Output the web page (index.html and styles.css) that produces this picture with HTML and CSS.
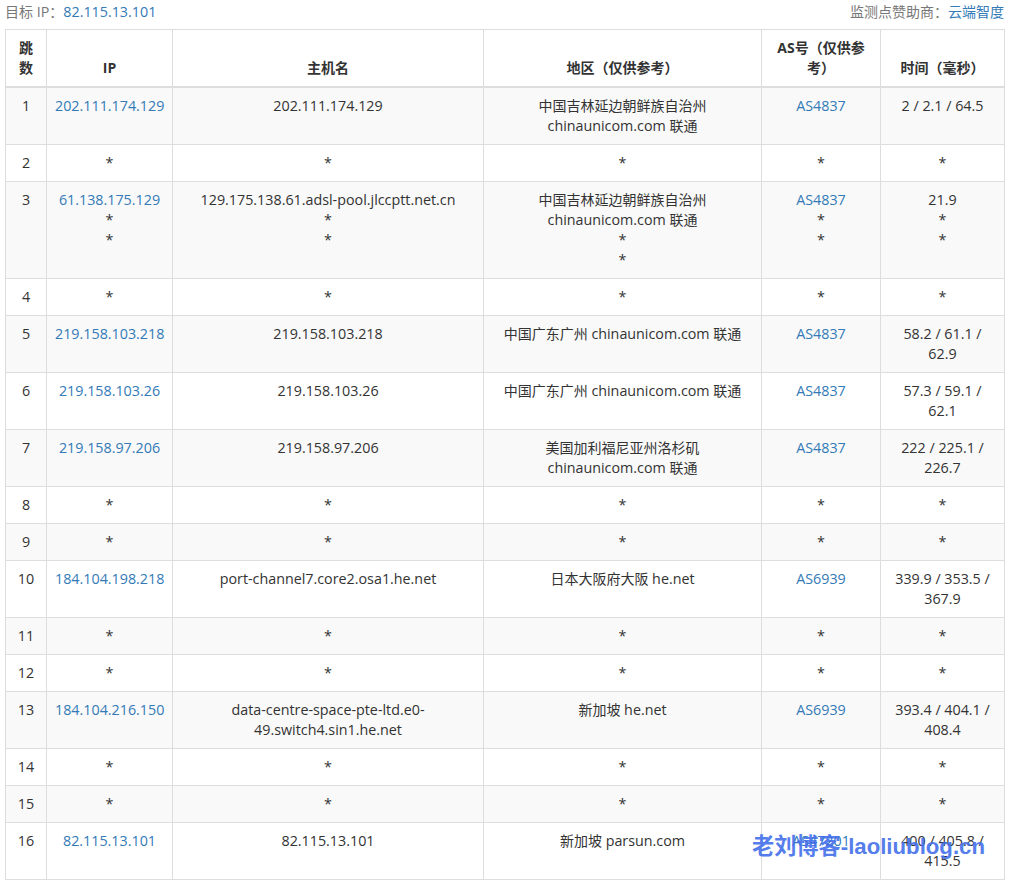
FILE: index.html
```html
<!DOCTYPE html>
<html lang="zh-CN">
<head>
<meta charset="utf-8">
<title>Traceroute</title>
<link rel="stylesheet" href="styles.css">
</head>
<body>
<div class="top">
  <div class="muted"><span class="zh">目标</span> IP<span class="zh">：</span><a href="#">82.115.13.101</a></div>
  <div class="muted"><span class="zh">监测点赞助商：</span><a href="#" class="zh">云端智度</a></div>
</div>
<table class="trace">
  <colgroup>
    <col class="c1"><col class="c2"><col class="c3"><col class="c4"><col class="c5"><col class="c6">
  </colgroup>
  <thead>
    <tr><th>跳数</th><th>IP</th><th>主机名</th><th>地区（仅供参考）</th><th>AS号（仅供参考）</th><th>时间（毫秒）</th></tr>
  </thead>
  <tbody>
    <tr class="alt"><td>1</td><td><a href="#">202.111.174.129</a></td><td>202.111.174.129</td><td><span class="zh">中国吉林延边朝鲜族自治州</span><br>chinaunicom.com <span class="zh">联通</span></td><td><a href="#">AS4837</a></td><td>2 / 2.1 / 64.5</td></tr>
    <tr><td>2</td><td>*</td><td>*</td><td>*</td><td>*</td><td>*</td></tr>
    <tr class="alt"><td>3</td><td><a href="#">61.138.175.129</a><br>*<br>*</td><td>129.175.138.61.adsl-pool.jlccptt.net.cn<br>*<br>*</td><td><span class="zh">中国吉林延边朝鲜族自治州</span><br>chinaunicom.com <span class="zh">联通</span><br>*<br>*</td><td><a href="#">AS4837</a><br>*<br>*</td><td>21.9<br>*<br>*</td></tr>
    <tr><td>4</td><td>*</td><td>*</td><td>*</td><td>*</td><td>*</td></tr>
    <tr class="alt"><td>5</td><td><a href="#">219.158.103.218</a></td><td>219.158.103.218</td><td><span class="zh">中国广东广州</span> chinaunicom.com <span class="zh">联通</span></td><td><a href="#">AS4837</a></td><td>58.2 / 61.1 / 62.9</td></tr>
    <tr><td>6</td><td><a href="#">219.158.103.26</a></td><td>219.158.103.26</td><td><span class="zh">中国广东广州</span> chinaunicom.com <span class="zh">联通</span></td><td><a href="#">AS4837</a></td><td>57.3 / 59.1 / 62.1</td></tr>
    <tr class="alt"><td>7</td><td><a href="#">219.158.97.206</a></td><td>219.158.97.206</td><td><span class="zh">美国加利福尼亚州洛杉矶</span><br>chinaunicom.com <span class="zh">联通</span></td><td><a href="#">AS4837</a></td><td>222 / 225.1 / 226.7</td></tr>
    <tr><td>8</td><td>*</td><td>*</td><td>*</td><td>*</td><td>*</td></tr>
    <tr class="alt"><td>9</td><td>*</td><td>*</td><td>*</td><td>*</td><td>*</td></tr>
    <tr><td>10</td><td><a href="#">184.104.198.218</a></td><td>port-channel7.core2.osa1.he.net</td><td><span class="zh">日本大阪府大阪</span> he.net</td><td><a href="#">AS6939</a></td><td>339.9 / 353.5 / 367.9</td></tr>
    <tr class="alt"><td>11</td><td>*</td><td>*</td><td>*</td><td>*</td><td>*</td></tr>
    <tr><td>12</td><td>*</td><td>*</td><td>*</td><td>*</td><td>*</td></tr>
    <tr class="alt"><td>13</td><td><a href="#">184.104.216.150</a></td><td>data-centre-space-pte-ltd.e0-49.switch4.sin1.he.net</td><td><span class="zh">新加坡</span> he.net</td><td><a href="#">AS6939</a></td><td>393.4 / 404.1 / 408.4</td></tr>
    <tr><td>14</td><td>*</td><td>*</td><td>*</td><td>*</td><td>*</td></tr>
    <tr class="alt"><td>15</td><td>*</td><td>*</td><td>*</td><td>*</td><td>*</td></tr>
    <tr><td>16</td><td><a href="#">82.115.13.101</a></td><td>82.115.13.101</td><td><span class="zh">新加坡</span> parsun.com</td><td><a href="#">AS47201</a></td><td>400 / 405.8 / 415.5</td></tr>
  </tbody>
</table>
<div class="mark">老刘博客-laoliublog.cn</div>
</body>
</html>
```
FILE: styles.css
```css
html, body { margin: 0; padding: 0; background: #fff; }
body {
  position: relative;
  height: 884px;
  overflow: hidden;
  padding: 0 7px 0 5px;
  box-sizing: border-box;
  font: 14.3px/20px "Open Sans", "Noto Sans CJK SC", sans-serif;
  color: #333;
}
a { color: #337ab7; text-decoration: none; }
.zh { font-size: 14px; }
.top { display: flex; justify-content: space-between; height: 29px; padding-top: 2px; box-sizing: border-box; }
.muted { color: #777; }
.trace { width: 999px; table-layout: fixed; border-collapse: collapse; }
.c1 { width: 41px; }
.c2 { width: 126px; }
.c3 { width: 311px; }
.c4 { width: 278px; }
.c5 { width: 119px; }
.c6 { width: 124px; }
.trace th, .trace td { border: 1px solid #ddd; padding: 8px; text-align: center; vertical-align: top; }
.trace th { vertical-align: bottom; border-bottom-width: 2px; font-size: 14px; font-weight: 700; }
.alt td { background: #f9f9f9; }
.mark {
  position: absolute;
  left: 752px;
  top: 832px;
  font: 700 22.2px/30px "Liberation Sans", "Noto Sans CJK SC", sans-serif;
  color: #4470ea;
  opacity: 0.9;
  white-space: nowrap;
}
```
